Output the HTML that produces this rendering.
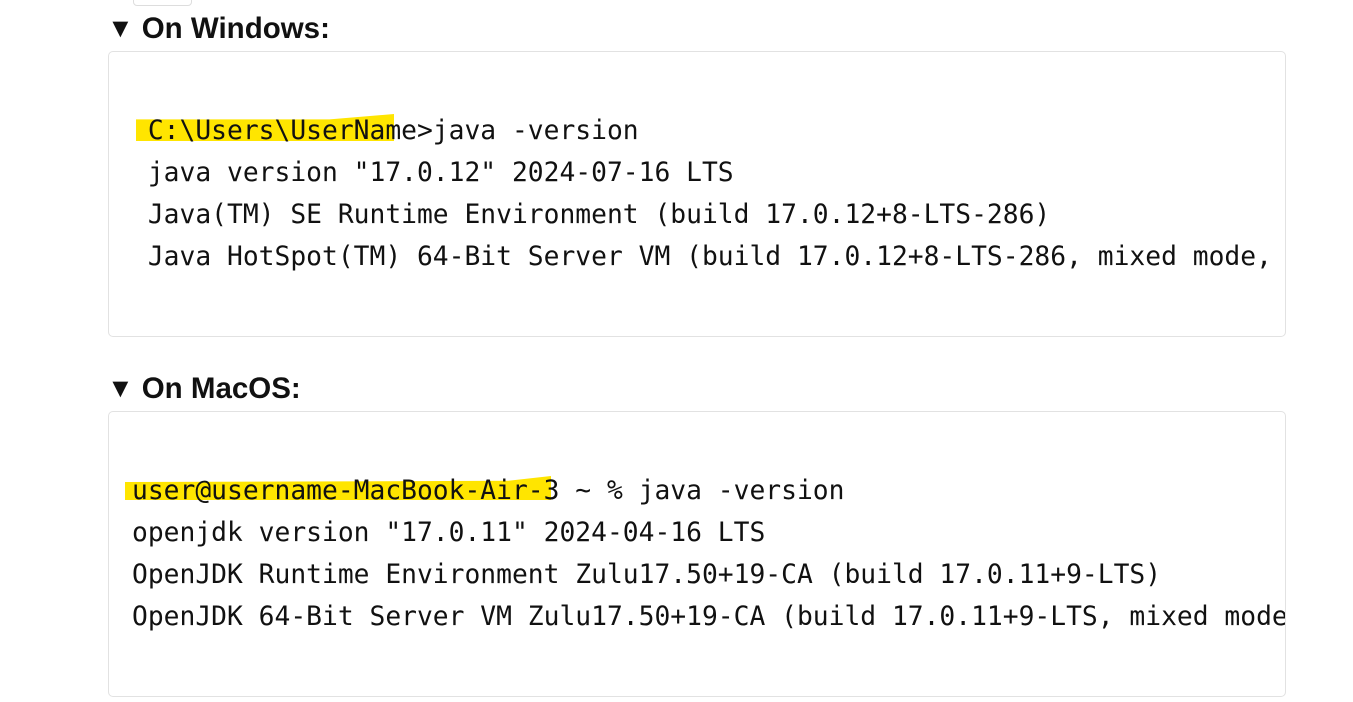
<html><head><style>
body{margin:0;width:1353px;height:702px;background:#fff;position:relative;overflow:hidden;font-family:"Liberation Sans",sans-serif;}
.h{position:absolute;left:107px;font-weight:bold;font-size:29.5px;color:#111;line-height:34px;}
.h span{font-size:27px;margin-right:8px;position:relative;top:-1px}
.box{position:absolute;left:108px;width:1176px;height:284px;border:1px solid #e2e2e2;border-radius:5px;overflow:hidden;}
pre{position:absolute;left:23px;margin:0;font-family:"DejaVu Sans Mono","Liberation Mono",monospace;font-size:26.3px;line-height:42px;color:#111;white-space:pre;}
.hl{position:absolute;background:#ffe500;}
</style></head><body>
<div style="position:absolute;left:133px;top:-10px;width:57px;height:14px;border:1px solid #ddd;border-radius:4px"></div>
<div class="h" style="top:12px"><span>▼</span>On Windows:</div>
<div class="box" style="top:51px">
<div class="hl" style="left:27px;top:62px;width:258px;height:27px;clip-path:polygon(0 20%,75% 20%,100% 0,100% 100%,0 100%)"></div>
<pre style="top:58px"> C:\Users\UserName>java -version
 java version "17.0.12" 2024-07-16 LTS
 Java(TM) SE Runtime Environment (build 17.0.12+8-LTS-286)
 Java HotSpot(TM) 64-Bit Server VM (build 17.0.12+8-LTS-286, mixed mode, sharing)</pre>
</div>
<div class="h" style="top:372px"><span>▼</span>On MacOS:</div>
<div class="box" style="top:411px">
<div class="hl" style="left:16px;top:64px;width:426px;height:24px;clip-path:polygon(0 25%,90% 20%,100% 0,100% 100%,0 100%)"></div>
<pre style="top:58px">user@username-MacBook-Air-3 ~ % java -version
openjdk version "17.0.11" 2024-04-16 LTS
OpenJDK Runtime Environment Zulu17.50+19-CA (build 17.0.11+9-LTS)
OpenJDK 64-Bit Server VM Zulu17.50+19-CA (build 17.0.11+9-LTS, mixed mode, sharing)</pre>
</div>
</body></html>
